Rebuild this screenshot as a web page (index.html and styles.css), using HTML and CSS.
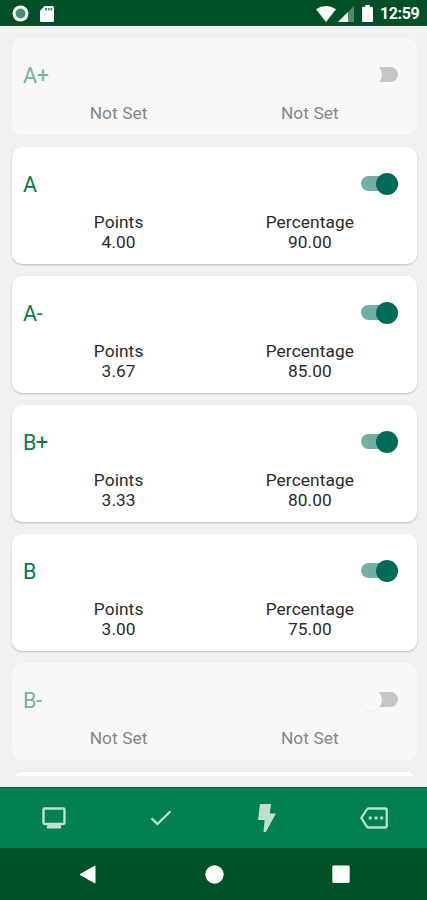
FILE: index.html
```html
<!DOCTYPE html>
<html lang="en">
<head>
    <meta charset="UTF-8">
    <meta name="viewport" content="width=device-width, initial-scale=1.0">
    <title>Grade Scale</title>
    <link rel="stylesheet" href="styles.css">
</head>
<body>
    <!-- Status Bar -->
    <header class="status-bar">
        <svg class="status-record" width="17" height="17" viewBox="0 0 17 17">
            <circle cx="8.5" cy="8.5" r="8" fill="#fff"/>
            <circle cx="8.5" cy="8.5" r="5" fill="#4a8e70"/>
        </svg>
        <svg class="status-card" width="14" height="16" viewBox="0 0 14 16">
            <path d="M4.6 0H12.5Q14 0 14 1.5V14.5Q14 16 12.5 16H1.5Q0 16 0 14.5V4.8Z" fill="#fff"/>
            <path d="M5 2h1.8v2.4H5zM7.8 2h1.8v2.4H7.8zM10.5 2h1.8v2.4h-1.8z" fill="#547c62"/>
        </svg>
        <div class="status-right">
            <svg width="20" height="16" viewBox="0 0 20 16">
                <path d="M0 3.3Q10-3.3 20 3.3L10 16Z" fill="#fff"/>
            </svg>
            <svg class="status-signal" width="16" height="16" viewBox="0 0 16 16">
                <path d="M16 0V16H0Z" fill="#548a6b"/>
                <path d="M10 6V16H0Z" fill="#fff"/>
            </svg>
            <svg class="status-battery" width="11" height="17" viewBox="0 0 11 17">
                <path d="M3.3 0H7.7V1.8H10Q11 1.8 11 2.8V16Q11 17 10 17H1Q0 17 0 16V2.8Q0 1.8 1 1.8H3.3Z" fill="#fff"/>
            </svg>
            <span class="status-time">12:59</span>
        </div>
    </header>

    <!-- Grade List -->
    <main class="grade-list">
        <section class="grade-card disabled">
            <div class="grade-head">
                <h2>A+</h2>
                <span class="switch"></span>
            </div>
            <div class="grade-values">
                <div>Not Set</div>
                <div>Not Set</div>
            </div>
        </section>

        <section class="grade-card">
            <div class="grade-head">
                <h2>A</h2>
                <span class="switch on"></span>
            </div>
            <div class="grade-values">
                <div>Points<br>4.00</div>
                <div>Percentage<br>90.00</div>
            </div>
        </section>

        <section class="grade-card">
            <div class="grade-head">
                <h2>A-</h2>
                <span class="switch on"></span>
            </div>
            <div class="grade-values">
                <div>Points<br>3.67</div>
                <div>Percentage<br>85.00</div>
            </div>
        </section>

        <section class="grade-card">
            <div class="grade-head">
                <h2>B+</h2>
                <span class="switch on"></span>
            </div>
            <div class="grade-values">
                <div>Points<br>3.33</div>
                <div>Percentage<br>80.00</div>
            </div>
        </section>

        <section class="grade-card">
            <div class="grade-head">
                <h2>B</h2>
                <span class="switch on"></span>
            </div>
            <div class="grade-values">
                <div>Points<br>3.00</div>
                <div>Percentage<br>75.00</div>
            </div>
        </section>

        <section class="grade-card disabled">
            <div class="grade-head">
                <h2>B-</h2>
                <span class="switch raised"></span>
            </div>
            <div class="grade-values">
                <div>Not Set</div>
                <div>Not Set</div>
            </div>
        </section>

        <section class="grade-card"></section>
    </main>

    <!-- Bottom Tabs -->
    <nav class="tab-bar">
        <a class="tab">
            <svg width="24" height="22" viewBox="0 0 24 22">
                <rect x="1.5" y="1.5" width="21" height="15.5" rx="1.2" fill="none" stroke="currentColor" stroke-width="2.4"/>
                <path d="M6 17H18L19 19V21.5H5V19Z" fill="currentColor"/>
            </svg>
        </a>
        <a class="tab">
            <svg width="22" height="16" viewBox="0 0 22 16">
                <path d="M1.5 8.3L7.5 14L20.5 1.3" fill="none" stroke="currentColor" stroke-width="2.3"/>
            </svg>
        </a>
        <a class="tab">
            <svg width="18" height="28" viewBox="0 0 18 28">
                <path d="M2 0H13L11.8 9.5H18L7.8 28H5.5L6.6 16H0Z" fill="currentColor"/>
            </svg>
        </a>
        <a class="tab">
            <svg width="28" height="22" viewBox="0 0 28 22">
                <path d="M8.5 1.5H25Q26.7 1.5 26.7 3.2V18.8Q26.7 20.5 25 20.5H8.5Q7.4 20.5 6.8 19.5L1.4 11L6.8 2.5Q7.4 1.5 8.5 1.5Z" fill="none" stroke="currentColor" stroke-width="2.3"/>
                <circle cx="10.3" cy="11" r="1.7" fill="currentColor"/>
                <circle cx="16" cy="11" r="1.7" fill="currentColor"/>
                <circle cx="21.6" cy="11" r="1.7" fill="currentColor"/>
            </svg>
        </a>
    </nav>

    <!-- System Navigation -->
    <footer class="system-nav">
        <svg width="17" height="19" viewBox="0 0 17 19">
            <path d="M16 1V18L1 9.5Z" fill="#fff" stroke="#fff" stroke-linejoin="round"/>
        </svg>
        <svg width="19" height="19" viewBox="0 0 19 19">
            <circle cx="9.5" cy="9.5" r="9.2" fill="#fff"/>
        </svg>
        <svg width="18" height="18" viewBox="0 0 18 18">
            <rect x="0.3" y="0.5" width="17.4" height="17.4" rx="1.4" fill="#fff"/>
        </svg>
    </footer>
</body>
</html>
```
FILE: styles.css
```css
* {
    box-sizing: border-box;
}

body {
    margin: 0;
    height: 900px;
    display: flex;
    flex-direction: column;
    overflow: hidden;
    background: #f1f1f1;
    font-family: Roboto, "Liberation Sans", sans-serif;
}

svg {
    display: block;
}

/* Status Bar */
.status-bar {
    height: 26px;
    flex: none;
    display: flex;
    align-items: center;
    padding: 1px 8px 0 12px;
    background: #005026;
}

.status-card {
    margin-left: 11px;
}

.status-right {
    display: flex;
    align-items: center;
    margin-left: auto;
}

.status-signal {
    margin-left: 2px;
}

.status-battery {
    margin-left: 8px;
}

.status-time {
    width: 39px;
    margin-left: 7px;
    padding-top: 1px;
    color: #fff;
    font-size: 16px;
    font-weight: 700;
    line-height: 18px;
    letter-spacing: -0.4px;
    white-space: nowrap;
}

/* Grade List */
.grade-list {
    height: 750px;
    flex: none;
    display: flex;
    flex-direction: column;
    gap: 12px;
    padding: 11px 10.5px 0 12px;
    border-top: 1px solid #fff;
    overflow: hidden;
}

.grade-card {
    height: 117px;
    flex: none;
    padding: 21px 11px 0;
    border-radius: 10px;
    background: #fff;
    box-shadow: 0 1px 2px rgba(0, 0, 0, 0.22);
    color: #2a2a2a;
}

.grade-card.disabled {
    height: 97px;
    background: #f8f8f8;
    box-shadow: none;
    color: #858585;
}

.grade-head {
    height: 30px;
    display: flex;
    align-items: center;
    justify-content: space-between;
    padding-right: 8px;
}

.grade-head h2 {
    margin: 2px 0 0;
    color: #0a7a45;
    font-size: 21.5px;
    font-weight: 400;
    letter-spacing: -0.3px;
}

.disabled .grade-head h2 {
    color: #70b59b;
}

.grade-values {
    display: grid;
    grid-template-columns: 1fr 1fr;
    margin-top: 14px;
    font-size: 17.3px;
    line-height: 20px;
    letter-spacing: 0.1px;
    text-align: center;
}

/* Switches */
.switch {
    position: relative;
    width: 37px;
    height: 15px;
    border-radius: 8px;
    background: linear-gradient(to right, transparent 18px, #c5c5c5 18px);
}

.switch::after {
    content: "";
    position: absolute;
    top: -3px;
    left: -1px;
    width: 22px;
    height: 22px;
    border-radius: 50%;
    background: #f8f8f8;
}

.switch.raised::after {
    box-shadow: 0 1px 1px -0.5px rgba(0, 0, 0, 0.08);
}

.switch.on {
    background: #72afa4;
}

.switch.on::after {
    left: 15px;
    background: #006b58;
}

/* Bottom Tabs */
.tab-bar {
    height: 61px;
    flex: none;
    display: flex;
    margin-top: 11px;
    padding-left: 1px;
    background: #038052;
    border-top: 1px solid #036b3e;
}

.tab {
    flex: 1;
    display: flex;
    align-items: center;
    justify-content: center;
    color: #bfe0d1;
}

/* System Navigation */
.system-nav {
    flex: 1;
    display: flex;
    align-items: center;
    justify-content: space-between;
    padding: 0 77px 0 79px;
    background: #005026;
}
```
